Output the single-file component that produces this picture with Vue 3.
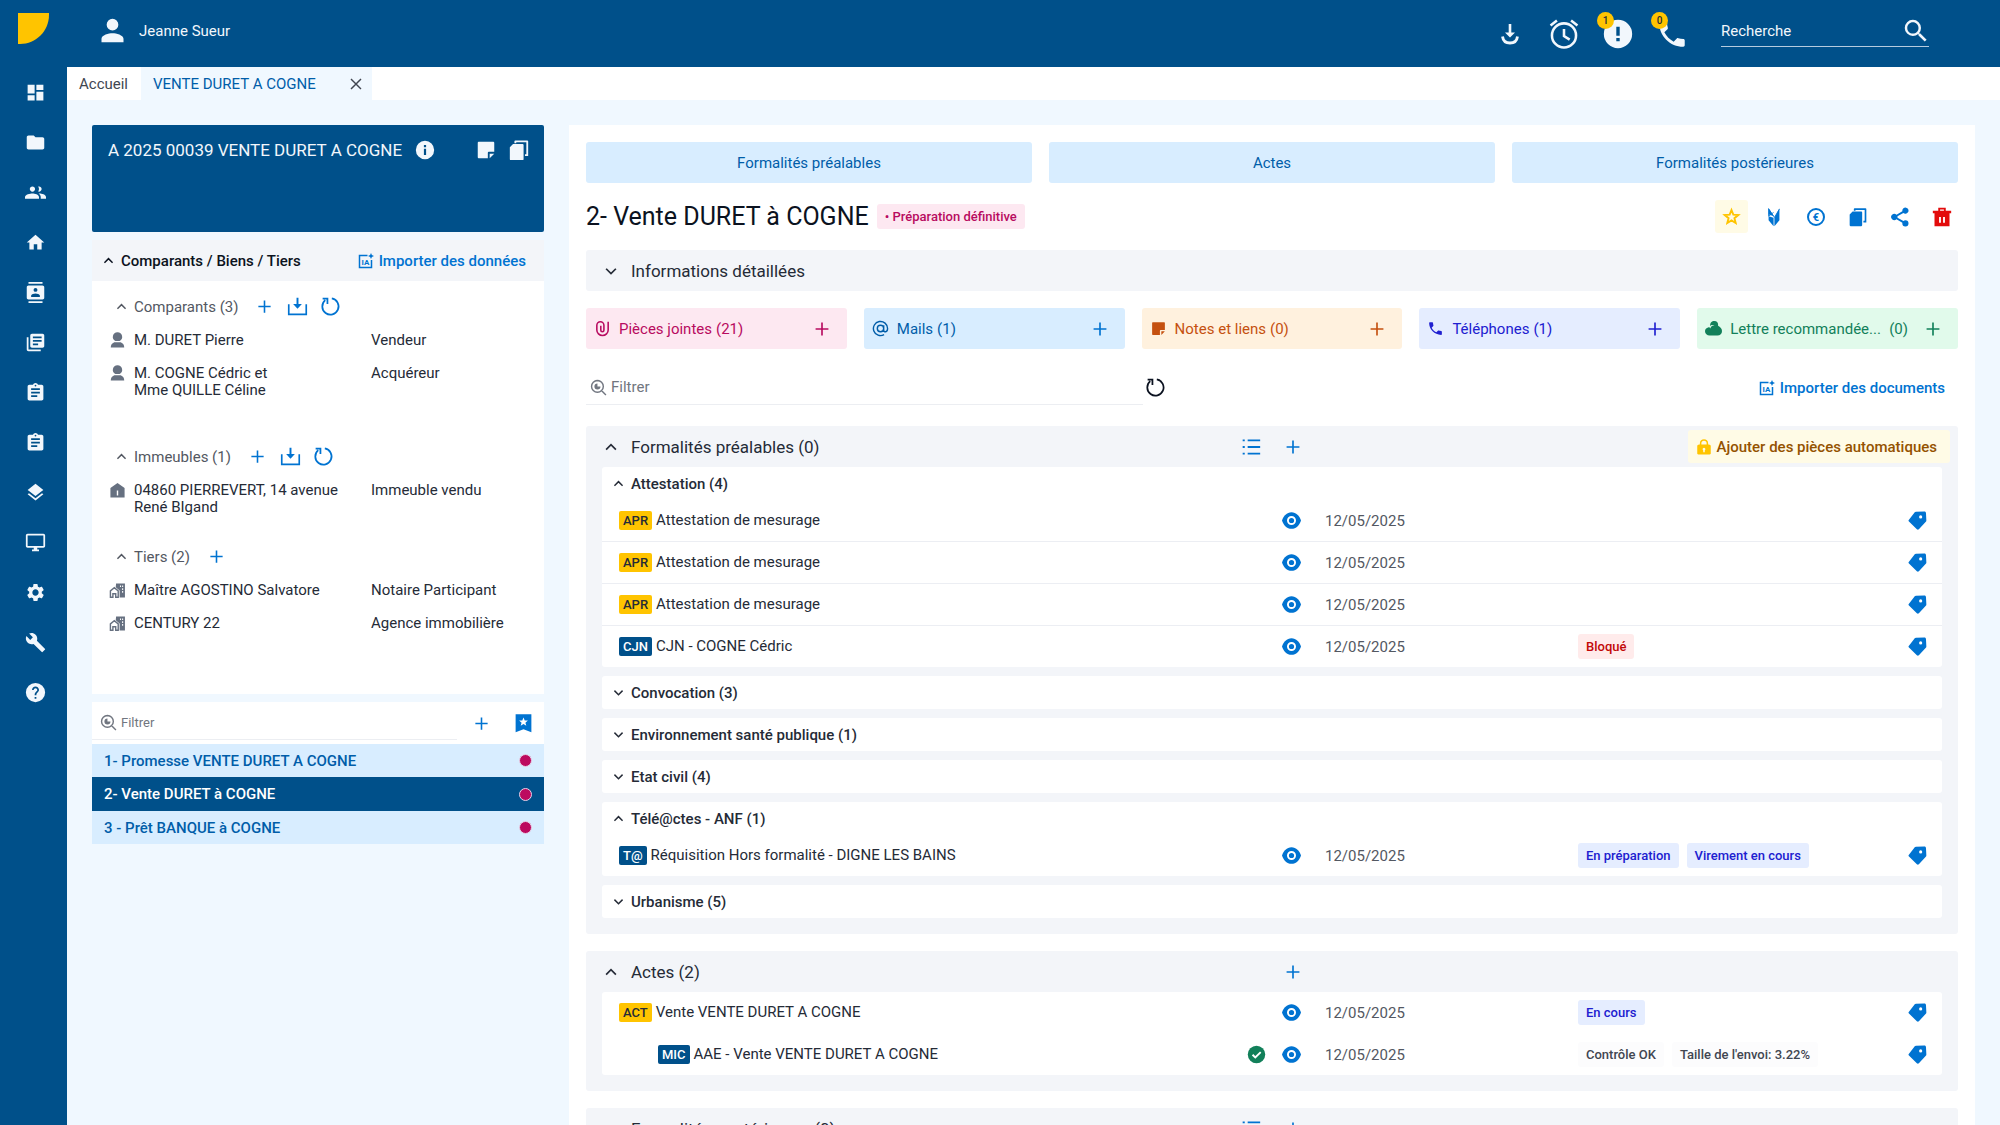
<template>
  <div class="app">
    <nav class="sidebar" aria-label="Navigation">
      <a href="#" class="logo" aria-label="Accueil">
        <svg viewBox="0 0 31 31" width="31" height="31"><path d="M0 0h31v2C31 18 18 31 2 31H0z" fill="#ffc400" /></svg>
      </a>
      <a v-for="item in navItems" :key="item.label" href="#" class="nav-link" :aria-label="item.label">
        <Icon :name="item.icon" :size="21" />
      </a>
    </nav>

    <div class="shell">
      <header class="topbar">
        <div class="user">
          <Icon name="person" :size="33" />
          <span>Jeanne Sueur</span>
        </div>
        <div class="top-actions">
          <button class="top-btn" aria-label="Téléchargements"><Icon name="download" :size="24" /></button>
          <button class="top-btn" aria-label="Rappels"><Icon name="alarm" :size="34" /></button>
          <button class="top-btn" aria-label="Alertes">
            <Icon name="alert" :size="34" />
            <span class="count">1</span>
          </button>
          <button class="top-btn" aria-label="Appels">
            <Icon name="phone" :size="34" />
            <span class="count">0</span>
          </button>
        </div>
        <div class="search">
          <input type="text" placeholder="Recherche" aria-label="Recherche" />
          <button aria-label="Lancer la recherche"><Icon name="search" :size="30" /></button>
        </div>
      </header>

      <div class="tabs">
        <a href="#" class="tab">Accueil</a>
        <div class="tab active">
          <a href="#">VENTE DURET A COGNE</a>
          <button aria-label="Fermer l'onglet"><Icon name="close" :size="20" /></button>
        </div>
      </div>

      <div class="page">
        <aside class="side">
          <div class="folder">
            <h1>A 2025 00039 VENTE DURET A COGNE</h1>
            <Icon name="info" :size="22" />
            <div class="folder-actions">
              <button aria-label="Note"><Icon name="note" :size="22" /></button>
              <button aria-label="Copier"><Icon name="copy" :size="22" /></button>
            </div>
          </div>

          <section class="parties">
            <div class="parties-head">
              <button class="parties-toggle"><Icon name="up" :size="15" />Comparants / Biens / Tiers</button>
              <button class="import"><IaIcon />Importer des données</button>
            </div>
            <div class="parties-body">
              <div v-for="group in partyGroups" :key="group.label" :class="['party-group', { tall: group.tall }]">
                <div class="party-head">
                  <button class="party-toggle"><Icon name="up" :size="15" />{{ group.label }} ({{ group.count }})</button>
                  <button v-for="action in group.actions" :key="action" class="blue" :aria-label="action">
                    <Icon :name="action" :size="21" />
                  </button>
                </div>
                <div v-for="item in group.items" :key="item.name" class="party">
                  <Icon :name="group.icon" :size="17" />
                  <span class="party-name">{{ item.name }}</span>
                  <span>{{ item.role }}</span>
                </div>
              </div>
            </div>
          </section>

          <section class="operations">
            <div class="operations-head">
              <label class="filter small">
                <Icon name="filter" :size="17" />
                <input type="text" placeholder="Filtrer" />
              </label>
              <button class="blue" aria-label="Ajouter"><Icon name="plus" :size="21" /></button>
              <button class="blue" aria-label="Favoris"><Icon name="bookmark" :size="21" /></button>
            </div>
            <a
              v-for="(op, i) in operations"
              :key="op"
              href="#"
              :class="['operation', { selected: i === 1 }]"
            >
              {{ op }}<span class="dot"></span>
            </a>
          </section>
        </aside>

        <main class="content">
          <div class="steps">
            <button v-for="step in steps" :key="step">{{ step }}</button>
          </div>

          <div class="title-row">
            <h2>2- Vente DURET à COGNE</h2>
            <span class="badge pink">• Préparation définitive</span>
            <div class="title-actions">
              <button class="star" aria-label="Favori"><Icon name="star" :size="19" /></button>
              <button aria-label="Foxnot"><Icon name="fox" :size="20" /></button>
              <button aria-label="Comptabilité">
                <svg viewBox="0 0 20 20" width="20" height="20" class="icon">
                  <circle cx="10" cy="10" r="8" fill="none" stroke="currentColor" stroke-width="2" />
                  <text x="10" y="14" text-anchor="middle" class="euro">€</text>
                </svg>
              </button>
              <button aria-label="Copier"><Icon name="copy" :size="20" /></button>
              <button aria-label="Partager"><Icon name="share" :size="20" /></button>
              <button class="danger" aria-label="Supprimer"><Icon name="trash" :size="20" /></button>
            </div>
          </div>

          <button class="details"><Icon name="down" :size="18" />Informations détaillées</button>

          <div class="tiles">
            <div v-for="tile in tiles" :key="tile.label" :class="['tile', tile.color]">
              <Icon :name="tile.icon" :size="17" />
              <a href="#" :class="{ clipped: tile.clipped }">{{ tile.label }}</a>
              <span>({{ tile.count }})</span>
              <button :aria-label="'Ajouter ' + tile.label"><Icon name="plus" :size="22" /></button>
            </div>
          </div>

          <div class="toolbar">
            <label class="filter">
              <Icon name="filter" :size="17" />
              <input type="text" placeholder="Filtrer" />
            </label>
            <button class="refresh" aria-label="Rafraîchir"><Icon name="refresh" :size="21" /></button>
            <button class="import"><IaIcon />Importer des documents</button>
          </div>

          <section v-for="section in sections" :key="section.label" class="section">
            <div class="section-head">
              <button class="section-toggle"><Icon name="up" :size="18" />{{ section.label }} ({{ section.count }})</button>
              <div class="section-tools">
                <span class="tool-slot">
                  <button v-if="section.list" class="blue" aria-label="Liste"><Icon name="list" :size="20" /></button>
                </span>
                <button class="blue tool-slot" aria-label="Ajouter"><Icon name="plus" :size="22" /></button>
                <button v-if="section.auto" class="auto"><Icon name="lock" :size="18" />Ajouter des pièces automatiques</button>
              </div>
            </div>
            <div class="groups">
              <div v-for="(group, g) in section.groups" :key="g" class="group">
                <button v-if="group.label" class="group-toggle">
                  <Icon :name="group.rows ? 'up' : 'down'" :size="15" />{{ group.label }} ({{ group.count }})
                </button>
                <table v-if="group.rows" :class="{ plain: !group.label }">
                  <colgroup>
                    <col />
                    <col class="col-check" />
                    <col class="col-eye" />
                    <col class="col-date" />
                    <col class="col-status" />
                    <col class="col-tag" />
                  </colgroup>
                  <tbody>
                    <tr v-for="(row, r) in group.rows" :key="r">
                      <td :class="['doc', { child: row.child }]">
                        <span :class="['code', row.color]">{{ row.code }}</span>
                        <a href="#">{{ row.name }}</a>
                      </td>
                      <td class="center"><Icon v-if="row.checked" name="check" :size="19" class="ok" /></td>
                      <td class="center">
                        <button class="blue" aria-label="Voir"><Icon name="eye" :size="19" /></button>
                      </td>
                      <td class="date">12/05/2025</td>
                      <td>
                        <div class="badges">
                          <span v-for="b in row.badges" :key="b" :class="['badge', row.badgeColor]">{{ b }}</span>
                        </div>
                      </td>
                      <td class="center">
                        <button class="blue" aria-label="Étiquette"><Icon name="tag" :size="19" /></button>
                      </td>
                    </tr>
                  </tbody>
                </table>
              </div>
            </div>
          </section>
        </main>
      </div>
    </div>
  </div>
</template>

<script setup>
import { h } from 'vue'

// d: filled shape, s: stroked shape (w wide), cut: white strokes on top
const icons = {
  dashboard: { d: 'M3 13h8V3H3v10zm0 8h8v-6H3v6zm10 0h8V11h-8v10zm0-18v6h8V3h-8z' },
  folder: { d: 'M10 4H4c-1.100 0-2 .9-2 2v12c0 1.100.9 2 2 2h16c1.100 0 2-.9 2-2V8c0-1.100-.9-2-2-2h-8l-2-2z' },
  people: { d: 'M16 11c1.660 0 3-1.340 3-3s-1.340-3-3-3c-.4 0-.7.1-1 .2.600.8 1 1.800 1 2.800s-.4 2-1 2.800c.3.100.600.2 1 .2zM8.500 11c1.700 0 3-1.340 3-3s-1.300-3-3-3-3 1.340-3 3 1.300 3 3 3zM8.500 13C6 13 0 14.200 0 17v2h16v-2c0-2.800-5-4-7.500-4zm8 0c-.3 0-.6 0-.9.100 1.400 1 2.400 2.300 2.400 3.900v2h6v-2c0-2.800-5-4-7.500-4z' },
  home: { d: 'M10 20v-6h4v6h5v-8h3L12 3 2 12h3v8z' },
  contacts: { d: 'M20 0H4v2h16V0zM4 24h16v-2H4v2zM20 4H4c-1.100 0-2 .9-2 2v12c0 1.100.9 2 2 2h16c1.100 0 2-.9 2-2V6c0-1.100-.9-2-2-2zm-8 2.750a2.250 2.250 0 1 1 0 4.500 2.250 2.250 0 0 1 0-4.500zM17 17H7v-1.500c0-1.670 3.330-2.500 5-2.500s5 .830 5 2.500V17z' },
  library: { d: 'M4 6H2v14c0 1.100.9 2 2 2h14v-2H4V6zm16-4H8c-1.100 0-2 .9-2 2v12c0 1.100.9 2 2 2h12c1.100 0 2-.9 2-2V4c0-1.100-.9-2-2-2zm-1 9H9V9h10v2zm-4 4H9v-2h6v2zm4-8H9V5h10v2z' },
  clipboard: { d: 'M19 3h-4.180C14.400 1.840 13.300 1 12 1s-2.400.84-2.820 2H5c-1.100 0-2 .9-2 2v14c0 1.100.9 2 2 2h14c1.100 0 2-.9 2-2V5c0-1.100-.9-2-2-2zm-7 0a1 1 0 1 1 0 2 1 1 0 0 1 0-2zm2 14H7v-2h7v2zm3-4H7v-2h10v2zm0-4H7V7h10v2z' },
  layers: { d: 'M12 18.500l-7.400-5.700L3 14l9 7 9-7-1.600-1.200L12 18.500zM12 16l7.400-5.700L21 9l-9-7-9 7 1.600 1.300L12 16z' },
  monitor: { d: 'M21 2H3c-1.100 0-2 .9-2 2v12c0 1.100.9 2 2 2h7v2H8v2h8v-2h-2v-2h7c1.100 0 2-.9 2-2V4c0-1.100-.9-2-2-2zm0 14H3V4h18v12z' },
  settings: { d: 'M19.140 12.940c.04-.3.060-.610.060-.940 0-.320-.020-.640-.070-.940l2.030-1.580a.49.49 0 0 0 .120-.610l-1.920-3.320a.488.488 0 0 0-.590-.220l-2.390.96c-.5-.380-1.030-.7-1.620-.940l-.360-2.540a.484.484 0 0 0-.480-.410h-3.840c-.240 0-.430.170-.470.410l-.360 2.540c-.590.240-1.130.570-1.620.940l-2.390-.96c-.220-.080-.470 0-.590.220L2.740 8.870c-.120.210-.080.470.120.610l2.030 1.580c-.050.3-.090.630-.090.940s.020.640.070.940l-2.030 1.580a.49.49 0 0 0-.120.610l1.920 3.320c.120.220.370.290.590.220l2.390-.96c.5.380 1.030.7 1.620.940l.360 2.540c.050.240.240.410.480.410h3.840c.240 0 .440-.170.470-.410l.360-2.540c.590-.240 1.130-.560 1.620-.940l2.390.96c.220.080.470 0 .590-.220l1.920-3.320a.49.49 0 0 0-.120-.610l-2.010-1.580zM12 15.600A3.610 3.610 0 0 1 8.400 12c0-1.980 1.620-3.600 3.600-3.600s3.600 1.620 3.600 3.600-1.620 3.600-3.600 3.600z' },
  wrench: { d: 'M22.700 19l-9.100-9.100c.9-2.300.4-5-1.500-6.900-2-2-5-2.400-7.400-1.300L9 6 6 9 1.600 4.700C.4 7.100.9 10.100 2.900 12.100c1.900 1.900 4.600 2.400 6.900 1.500l9.100 9.100c.4.400 1 .4 1.400 0l2.300-2.300c.5-.4.5-1.100.1-1.400z' },
  help: { d: 'M12 1a11 11 0 1 0 0 22 11 11 0 0 0 0-22zm1 18h-2v-2h2v2zm2.070-7.750l-.9.920C13.450 12.900 13 13.500 13 15h-2v-.5c0-1.100.450-2.100 1.170-2.830l1.240-1.260c.370-.360.590-.860.590-1.410 0-1.100-.9-2-2-2s-2 .9-2 2H8c0-2.210 1.790-4 4-4s4 1.790 4 4c0 .880-.360 1.680-.930 2.250z' },
  person: { d: 'M12 12a4 4 0 1 0 0-8.500A4 4 0 0 0 12 12zm0 2c-2.700 0-8 1.300-8 4v2.500h16V18c0-2.700-5.300-4-8-4z' },
  download: { d: 'M10.700 2h2.600v8.500H17L12 15.500 7 10.500h3.700z', s: 'M4.500 14.500c.6 4.500 4 6.500 7.500 6.500s6.900-2 7.500-6.500', w: 2.800 },
  alarm: { s: 'M12 4.500a8.500 8.500 0 1 0 0 17 8.500 8.500 0 0 0 0-17zM12 8.500v5l4 2.500M2.500 6L7 2.500M21.500 6L17 2.500', w: 1.8 },
  alert: { d: 'M12 2a10 10 0 1 0 0 20 10 10 0 0 0 0-20zm1.200 15.200h-2.400v-2.400h2.400v2.400zm0-4h-2.400V6.800h2.400v6.400z' },
  phone: { d: 'M6.600 10.800c1.440 2.830 3.760 5.140 6.590 6.590l2.200-2.200c.270-.270.670-.360 1.020-.240 1.120.370 2.330.570 3.570.570.550 0 1 .450 1 1V20c0 .550-.450 1-1 1C10.600 21 3 13.400 3 4c0-.550.450-1 1-1h3.500c.550 0 1 .450 1 1 0 1.250.2 2.450.570 3.570.110.350.030.740-.250 1.020L6.600 10.800z' },
  search: { d: 'M15.500 14h-.79l-.280-.270A6.471 6.471 0 0 0 16 9.500 6.500 6.500 0 1 0 9.500 16c1.610 0 3.090-.590 4.230-1.570l.270.280v.79l5 4.990L20.490 19l-4.990-5zm-6 0C7.010 14 5 11.990 5 9.500S7.010 5 9.500 5 14 7.010 14 9.500 11.990 14 9.500 14z' },
  close: { s: 'M6 6l12 12M18 6L6 18', w: 1.7 },
  info: { d: 'M12 2a10 10 0 1 0 0 20 10 10 0 0 0 0-20zm1.200 15.500h-2.400v-7h2.400v7zm0-8.600h-2.400V6.500h2.400v2.400z' },
  note: { d: 'M4 3h16c.6 0 1 .4 1 1v10h-6c-.6 0-1 .4-1 1v6H4c-.6 0-1-.4-1-1V4c0-.6.400-1 1-1zm12 18v-5h5z' },
  copy: { d: 'M5.500 5.500H16c.6 0 1 .4 1 1V22c0 .6-.4 1-1 1H3c-.6 0-1-.4-1-1V9zM8 1.500h13c.6 0 1 .4 1 1V18.500h-3.500v-2H20v-13H9V4.500H7v-2c0-.6.400-1 1-1z' },
  up: { s: 'M5.500 15.500L12 9l6.500 6.500', w: 2.3 },
  down: { s: 'M5.500 9L12 15.500 18.500 9', w: 2.3 },
  plus: { s: 'M12 5v14M5 12h14', w: 1.8 },
  inbox: { d: 'M10.900 2h2.200v7H17l-5 5.500L7 9h3.900z', s: 'M2 9.500v11.500h20V9.500', w: 1.9 },
  refresh: { s: 'M13.500 2.800A9.300 9.300 0 1 1 6 4.800M3 3h5.500v6', w: 2 },
  man: { d: 'M12 0.500a6.500 6.500 0 0 1 3 12.300H9A6.500 6.500 0 0 1 12 .5zM7.500 14.500h9c3.500 1.500 5 4 5 7.500h-19c0-3.500 1.500-6 5-7.500z' },
  house: { d: 'M12 1.500L22 8.500V22H2V8.500zM11 12v7h2v-7z' },
  agency: { d: 'M10 2h12.500v20H15v-10L9.500 7.500z', s: 'M2 21.500v-9L7.500 8l5.500 4.500v9H9.500v-5h-4v5z', w: 2, cut: 'M15.500 6h1.500M18.500 6H20M18.500 10H20M18.500 14H20' },
  filter: { s: 'M10.500 2.200a8.300 8.300 0 1 0 0 16.600 8.300 8.300 0 0 0 0-16.600zM16.500 16.500l6 6', w: 2, d: 'M10.500 6.200v4.300h4.300a4.300 4.300 0 1 1-4.300-4.300z' },
  bookmark: { d: 'M3 1.500h18v20.500l-9-3.500-9 3.500zM12 5l-1.400 3.500-3.600.2 2.800 2.300-1 3.600 3.200-2 3.200 2-1-3.600L17 8.700l-3.600-.2z' },
  star: { s: 'M12 3.800l2.300 5.900 6.300.4-4.900 4 1.600 6.100L12 16.900l-5.300 3.300 1.600-6.100-4.900-4 6.300-.4z', w: 2.4 },
  fox: { d: 'M5.500 1.500L12 11 5.500 9zM18.500 1.500V16L12.500 23V13zM5.500 11l6 2V23l-6-7z', s: 'M5.500 2v9l6-4.500M5.500 2l7 10.500 6-10', w: 1 },
  share: { d: 'M18.500 16a3.500 3.500 0 0 0-2.400.9L9 12.800v-1.600l7-4.100A3.700 3.700 0 1 0 14.800 4.500v.7l-7 4a3.800 3.800 0 1 0 0 5.600l7 4.100v.6a3.700 3.700 0 1 0 3.700-3.500z' },
  trash: { d: 'M7.500 1h9v3.500H23v3h-2V23H3V7.500H1v-3h6.500zm2.200 2v1.500h4.600V3zM8.500 12v7h2.200v-7zm4.800 0v7h2.200v-7z' },
  clip: { s: 'M20 2.500v11.500a8 8 0 0 1-16 0V7.500a5 5 0 0 1 10 0v7a2.200 2.200 0 0 1-4.400 0V8', w: 2.200 },
  at: { s: 'M16.500 7.500v6.500c0 4 5.500 3.500 5.500-2A10 10 0 1 0 17 20.700M12 7.500a4.500 4.500 0 1 0 0 9 4.500 4.500 0 0 0 0-9z', w: 2 },
  cloud: { d: 'M7.500 9C6.500 4 10 1.500 13 1.500c4 0 6 2.500 5.500 6.500C21.500 9.500 24 12 24 15.500c0 4-2.500 6.500-6.500 6.500h-11C3 22 0 19.500 0 16s2-5 4.500-5.500c1.500-.5 2.500 0 3 1.500 1-3 3-4.500 6-4.500-3-1-5.500-.5-6 1.500z' },
  list: { s: 'M8 4h15M8 12h15M8 20h15M2 4h2.500M2 12h2.500M2 20h2.500', w: 2.200 },
  lock: { d: 'M18.500 8.500h-1V7a5.500 5.500 0 0 0-11 0v1.500h-1C4.100 8.500 3 9.500 3 10.500v10C3 21.500 4.100 22 5.500 22h13c1.400 0 2.500-.5 2.500-1.500v-10c0-1-1.100-2-2.500-2zM8.500 7a3.500 3.500 0 0 1 7 0v1.500h-7zm4.500 9.500V19h-2v-2.500a1.800 1.800 0 1 1 2 0z' },
  check: { d: 'M12 1a11 11 0 1 0 0 22 11 11 0 0 0 0-22z', cut: 'M7 12.300l3.500 3.500L17.300 9' },
  eye: { d: 'M12 1.500C18 1.500 22 6 24 12c-2 6-6 10.500-12 10.500S2 18 0 12C2 6 6 1.500 12 1.500z', cut: 'M12 7.500a4.500 4.500 0 1 0 0 9 4.500 4.500 0 0 0 0-9z' },
  tag: { d: 'M10 .9L20.700.5c1.200 0 2 .8 2 2L23.200 12c0 .7-.2 1.200-.7 1.700l-8.800 9.500c-.8.8-1.700.8-2.500 0L1.200 13.200c-.8-.8-.8-1.500 0-2.300L8.500 1.700c.4-.5.9-.8 1.500-.8zM16 5.500a2 2 0 1 0 0 4 2 2 0 0 0 0-4z' }
}

const Icon = ({ name, size }) => {
  const { d, s, w, cut } = icons[name]
  return h('svg', { class: 'icon', viewBox: '0 0 24 24', width: size, height: size, 'aria-hidden': true }, [
    d && h('path', { d, fill: 'currentColor', 'fill-rule': 'evenodd' }),
    s && h('path', { d: s, fill: 'none', stroke: 'currentColor', 'stroke-width': w }),
    cut && h('path', { d: cut, fill: 'none', stroke: '#fff', 'stroke-width': 2.4 })
  ])
}
Icon.props = ['name', 'size']

const IaIcon = () =>
  h('svg', { class: 'icon', viewBox: '0 0 16 16', width: 16, height: 16, 'aria-hidden': true }, [
    h('path', { d: 'M9.500 2.500H1.500v12h12V7', fill: 'none', stroke: 'currentColor', 'stroke-width': 1.5 }),
    h('path', { d: 'M13 0l.9 2.100 2.100.9-2.100.9L13 6l-.9-2.100L10 3l2.100-.9z', fill: 'currentColor' }),
    h('text', { x: 7.5, y: 12, 'text-anchor': 'middle', fill: 'currentColor', 'font-size': 8, 'font-weight': 700 }, 'IA')
  ])

const navItems = [
  { icon: 'dashboard', label: 'Tableau de bord' },
  { icon: 'folder', label: 'Dossiers' },
  { icon: 'people', label: 'Clients' },
  { icon: 'home', label: 'Immeubles' },
  { icon: 'contacts', label: 'Contacts' },
  { icon: 'library', label: 'Bibliothèque' },
  { icon: 'clipboard', label: 'Tâches' },
  { icon: 'clipboard', label: 'Suivi' },
  { icon: 'layers', label: 'Modèles' },
  { icon: 'monitor', label: 'Poste' },
  { icon: 'settings', label: 'Paramètres' },
  { icon: 'wrench', label: 'Outils' },
  { icon: 'help', label: 'Aide' }
]

const partyGroups = [
  {
    label: 'Comparants',
    count: 3,
    icon: 'man',
    tall: true,
    actions: ['plus', 'inbox', 'refresh'],
    items: [
      { name: 'M. DURET Pierre', role: 'Vendeur' },
      { name: 'M. COGNE Cédric et\nMme QUILLE Céline', role: 'Acquéreur' }
    ]
  },
  {
    label: 'Immeubles',
    count: 1,
    icon: 'house',
    actions: ['plus', 'inbox', 'refresh'],
    items: [{ name: '04860 PIERREVERT, 14 avenue\nRené BIgand', role: 'Immeuble vendu' }]
  },
  {
    label: 'Tiers',
    count: 2,
    icon: 'agency',
    actions: ['plus'],
    items: [
      { name: 'Maître AGOSTINO Salvatore', role: 'Notaire Participant' },
      { name: 'CENTURY 22', role: 'Agence immobilière' }
    ]
  }
]

const operations = ['1- Promesse VENTE DURET A COGNE', '2- Vente DURET à COGNE', '3 - Prêt BANQUE à COGNE']

const steps = ['Formalités préalables', 'Actes', 'Formalités postérieures']

const tiles = [
  { label: 'Pièces jointes', count: 21, icon: 'clip', color: 'pink' },
  { label: 'Mails', count: 1, icon: 'at', color: 'sky' },
  { label: 'Notes et liens', count: 0, icon: 'note', color: 'orange' },
  { label: 'Téléphones', count: 1, icon: 'phone', color: 'indigo' },
  { label: 'Lettre recommandée...', count: 0, icon: 'cloud', color: 'green', clipped: true }
]

const mesurage = { code: 'APR', color: 'yellow', name: 'Attestation de mesurage' }

const sections = [
  {
    label: 'Formalités préalables',
    count: 0,
    list: true,
    auto: true,
    groups: [
      {
        label: 'Attestation',
        count: 4,
        rows: [
          mesurage,
          mesurage,
          mesurage,
          { code: 'CJN', color: 'navy', name: 'CJN - COGNE Cédric', badges: ['Bloqué'], badgeColor: 'red' }
        ]
      },
      { label: 'Convocation', count: 3 },
      { label: 'Environnement santé publique', count: 1 },
      { label: 'Etat civil', count: 4 },
      {
        label: 'Télé@ctes - ANF',
        count: 1,
        rows: [
          {
            code: 'T@',
            color: 'navy',
            name: 'Réquisition Hors formalité - DIGNE LES BAINS',
            badges: ['En préparation', 'Virement en cours'],
            badgeColor: 'indigo'
          }
        ]
      },
      { label: 'Urbanisme', count: 5 }
    ]
  },
  {
    label: 'Actes',
    count: 2,
    groups: [
      {
        rows: [
          { code: 'ACT', color: 'yellow', name: 'Vente VENTE DURET A COGNE', badges: ['En cours'], badgeColor: 'indigo' },
          {
            code: 'MIC',
            color: 'navy',
            name: 'AAE - Vente VENTE DURET A COGNE',
            child: true,
            checked: true,
            badges: ['Contrôle OK', "Taille de l'envoi: 3.22%"],
            badgeColor: 'grey'
          }
        ]
      }
    ]
  },
  { label: 'Formalités postérieures', count: 0, list: true, groups: [] }
]
</script>

<style>
body {
  margin: 0;
}
</style>

<style scoped>
.app {
  display: flex;
  height: 100vh;
  overflow: hidden;
  background: #00508a;
  color: #252b37;
  font: 15px/18px Roboto, 'Liberation Sans', sans-serif;
}

.app * {
  box-sizing: border-box;
}

button {
  display: inline-flex;
  align-items: center;
  padding: 0;
  border: none;
  background: none;
  color: inherit;
  font: inherit;
  cursor: pointer;
}

a {
  color: inherit;
  text-decoration: none;
}

input {
  flex: 1;
  min-width: 0;
  padding: 0;
  border: none;
  outline: none;
  background: transparent;
  color: inherit;
  font: inherit;
}

input::placeholder {
  color: inherit;
  opacity: 1;
}

h1,
h2 {
  margin: 0;
  font-weight: 400;
}

.icon {
  display: block;
  flex-shrink: 0;
}

.blue {
  color: #0073d1;
}

/* Sidebar */
.sidebar {
  display: flex;
  flex-direction: column;
  flex-shrink: 0;
  width: 67px;
  color: #f2f7fc;
}

.logo {
  height: 67px;
  padding: 13px 0 0 18px;
}

.nav-link {
  display: flex;
  align-items: center;
  justify-content: center;
  height: 50px;
  padding-left: 3px;
}

/* Header */
.shell {
  display: flex;
  flex: 1;
  flex-direction: column;
  min-width: 0;
}

.topbar {
  display: flex;
  align-items: center;
  flex-shrink: 0;
  height: 67px;
  padding: 0 71px 0 29px;
  color: #f2f7fc;
}

.user {
  display: flex;
  align-items: center;
  gap: 10px;
  margin: 0 auto 6px 0;
}

.top-actions {
  display: flex;
  gap: 20px;
  margin-right: 32px;
}

.top-btn {
  position: relative;
  justify-content: center;
  width: 34px;
  height: 34px;
}

.count {
  position: absolute;
  top: -5px;
  left: -4px;
  width: 17px;
  height: 17px;
  border-radius: 50%;
  background: #ffc400;
  color: #252b37;
  font-size: 10px;
  font-weight: 500;
}

.search {
  display: flex;
  align-items: center;
  width: 208px;
  height: 31px;
  margin-bottom: 5px;
  border-bottom: 1px solid #b5cbdf;
}

.search button {
  margin-right: -2px;
}

/* Tabs */
.tabs {
  display: flex;
  flex-shrink: 0;
  height: 33px;
  background: #fff;
  color: #414651;
}

.tab {
  display: flex;
  align-items: center;
  padding: 0 13px 0 12px;
}

.tab.active {
  gap: 30px;
  padding: 0 6px 0 12px;
  background: #f0f8ff;
}

.active a {
  color: #005da9;
}

/* Page */
.page {
  display: flex;
  flex: 1;
  gap: 25px;
  min-height: 0;
  padding: 25px 25px 0;
  background: #f0f8ff;
}

.side {
  display: flex;
  flex-direction: column;
  flex-shrink: 0;
  gap: 8px;
  width: 452px;
}

.folder {
  display: flex;
  align-items: flex-start;
  gap: 12px;
  height: 107px;
  padding: 14px 14px 0 16px;
  border-radius: 2px;
  background: #00508a;
  color: #f2f7fc;
}

.folder h1 {
  font-size: 17px;
  line-height: 22px;
}

.folder-actions {
  display: flex;
  gap: 11px;
  margin-left: auto;
}

.parties-head {
  display: flex;
  align-items: center;
  justify-content: space-between;
  height: 41px;
  padding: 0 18px 0 9px;
  background: #f3f5f9;
}

.parties-toggle {
  gap: 5px;
  color: #0b1220;
  font-weight: 500;
}

.import {
  gap: 5px;
  color: #0073d1;
  font-weight: 500;
}

.parties-body {
  min-height: 413px;
  padding: 9px 0;
  background: #fff;
}

.party-group {
  min-height: 100px;
}

.party-group.tall {
  min-height: 150px;
}

.party-head {
  display: flex;
  align-items: center;
  gap: 12px;
  height: 33px;
  padding-left: 22px;
  color: #535862;
}

.party-toggle {
  gap: 5px;
  margin-right: 4px;
}

.party {
  display: grid;
  grid-template-columns: 17px 229px 1fr;
  gap: 8px;
  padding: 9px 0 7px 17px;
  line-height: 17px;
  white-space: pre-line;
}

.party .icon {
  color: #667080;
}

.operations {
  background: #fff;
}

.operations-head {
  display: flex;
  align-items: center;
  gap: 21px;
  height: 42px;
  padding-right: 10px;
}

.filter {
  display: flex;
  align-items: center;
  gap: 4px;
  height: 34px;
  border-bottom: 1px solid #eceef2;
  color: #717680;
}

.filter.small {
  flex: 1;
  margin-right: -7px;
  padding-left: 8px;
  font-size: 13px;
}

.operation {
  display: flex;
  align-items: center;
  justify-content: space-between;
  height: 33px;
  padding: 0 12px;
  background: #d8edff;
  color: #005da9;
  font-weight: 500;
}

.operation.selected {
  height: 34px;
  background: #00508a;
  color: #fff;
}

.dot {
  width: 13px;
  height: 13px;
  border: 1px solid #e6d3e8;
  border-radius: 50%;
  background: #bc0a5f;
}

/* Content */
.content {
  display: flex;
  flex: 1;
  flex-direction: column;
  gap: 17px;
  min-width: 0;
  padding: 17px;
  overflow-y: auto;
  scrollbar-width: none;
  background: #fff;
}

.content > * {
  flex-shrink: 0;
}

.steps {
  display: grid;
  grid-template-columns: repeat(3, 1fr);
  gap: 17px;
}

.steps button {
  justify-content: center;
  height: 41px;
  border-radius: 3px;
  background: #d8edff;
  color: #005da9;
}

.title-row {
  display: flex;
  align-items: center;
  gap: 8px;
  height: 33px;
}

.title-row h2 {
  color: #0b1220;
  font-size: 25px;
  line-height: 34px;
}

.title-actions {
  display: flex;
  gap: 9px;
  margin-left: auto;
  color: #0073d1;
}

.title-actions button {
  justify-content: center;
  width: 33px;
  height: 33px;
  border-radius: 3px;
}

.title-actions .star {
  background: #fffbe6;
  color: #ffc400;
}

.title-actions .danger {
  color: #e30c0c;
}

.euro {
  fill: currentColor;
  font-size: 11px;
  font-weight: 700;
}

.badge {
  padding: 4px 8px;
  border-radius: 3px;
  font-size: 13px;
  font-weight: 500;
  line-height: 17px;
  white-space: nowrap;
}

.pink {
  background: #fde8f1;
  color: #b80b60;
}

.sky {
  background: #d8edff;
  color: #005da9;
}

.orange {
  background: #fff1de;
  color: #c5500f;
}

.indigo {
  background: #e5edff;
  color: #2020d0;
}

.green {
  background: #e1faeb;
  color: #12805a;
}

.red {
  background: #ffebeb;
  color: #c20808;
}

.grey {
  background: #fcfcfd;
  color: #414651;
}

.details {
  gap: 11px;
  height: 41px;
  padding-left: 16px;
  border-radius: 3px;
  background: #f3f5f9;
  font-size: 17px;
}

.tiles {
  display: grid;
  grid-template-columns: repeat(5, 1fr);
  gap: 17px;
}

.tile {
  display: flex;
  align-items: center;
  gap: 4px;
  height: 41px;
  padding: 0 14px 0 8px;
  border-radius: 3px;
  white-space: nowrap;
}

.tile a {
  margin-left: 4px;
}

.tile .clipped {
  flex: 1;
  overflow: hidden;
}

.tile button {
  margin-left: auto;
}

.tile .clipped ~ button {
  margin-left: 10px;
}

.sky button {
  color: #0073d1;
}

.toolbar {
  display: flex;
  align-items: center;
  height: 43px;
  padding-right: 13px;
}

.toolbar .filter {
  width: 41%;
  padding-left: 4px;
}

.refresh {
  margin: 0 auto 0 2px;
  color: #0b1220;
}

/* Sections */
.section {
  padding-bottom: 16px;
  border-radius: 3px;
  background: #f3f5f9;
}

.section-head {
  display: flex;
  align-items: center;
  justify-content: space-between;
  height: 41px;
  padding: 0 8px 0 16px;
}

.section-toggle {
  gap: 11px;
  font-size: 17px;
}

.section-tools {
  display: flex;
  align-items: center;
  width: 720px;
}

.tool-slot {
  display: flex;
  justify-content: center;
  width: 42px;
}

.auto {
  gap: 4px;
  height: 33px;
  margin-left: auto;
  padding: 0 13px 0 7px;
  border-radius: 3px;
  background: #fffbe6;
  color: #945200;
  font-weight: 500;
}

.auto .icon {
  color: #ffc400;
}

.groups {
  display: flex;
  flex-direction: column;
  gap: 9px;
  padding: 0 16px;
}

.group {
  border-radius: 3px;
  background: #fff;
}

.group-toggle {
  gap: 5px;
  width: 100%;
  height: 33px;
  padding-left: 9px;
  font-weight: 500;
}

table {
  width: 100%;
  table-layout: fixed;
  border-collapse: separate;
  border-spacing: 0;
}

td {
  height: 41px;
  padding: 0;
}

tr:not(:last-child) td {
  height: 42px;
  border-bottom: 1px solid #eceef3;
}

.plain tr:not(:last-child) td {
  border-color: transparent;
}

.col-check {
  width: 36px;
}

.col-eye {
  width: 35px;
}

.col-date {
  width: 269px;
}

.col-status {
  width: 314px;
}

.col-tag {
  width: 50px;
}

.center button,
.center .icon {
  display: block;
  margin: 0 auto;
}

.doc {
  padding-left: 17px;
}

.doc.child {
  padding-left: 56px;
}

.code {
  display: inline-block;
  margin-right: 4px;
  padding: 0 4px;
  border-radius: 2px;
  font-size: 13px;
  font-weight: 500;
  line-height: 19px;
}

.yellow {
  background: #ffc400;
}

.navy {
  background: #00508a;
  color: #fff;
}

.ok {
  color: #12805a;
}

.date {
  padding-left: 16px;
  color: #535862;
}

.badges {
  display: flex;
  gap: 8px;
}
</style>
